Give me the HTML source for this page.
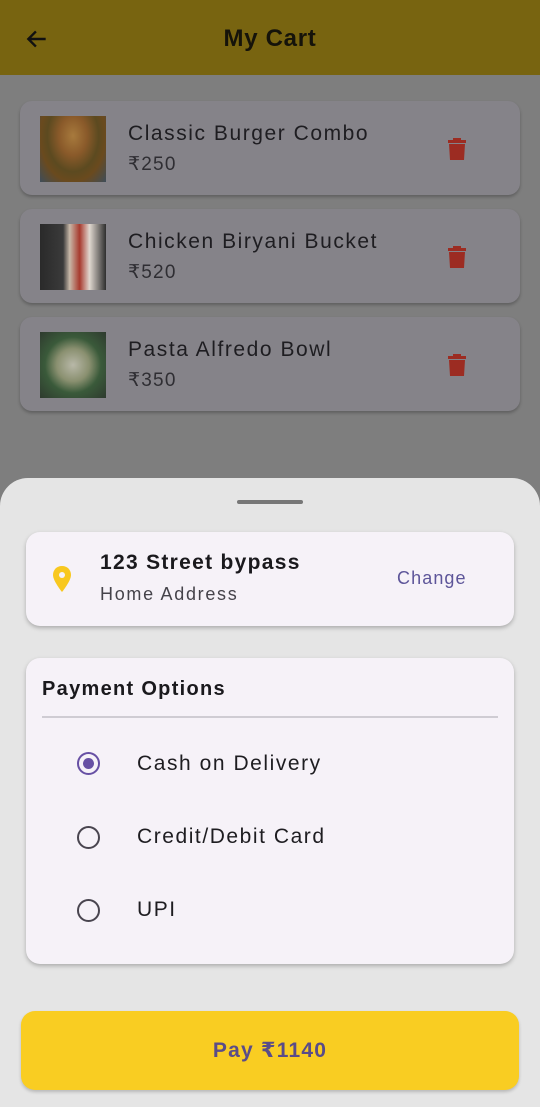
<!DOCTYPE html>
<html><head><meta charset="utf-8"><style>
*{margin:0;padding:0;box-sizing:border-box}
body{width:540px;height:1107px;overflow:hidden;background:#7e7e7e;font-family:"Liberation Sans","DejaVu Sans",sans-serif;position:relative;color:#1c1b1f}
.abs{position:absolute}
.bar{left:0;top:0;width:540px;height:75px;background:#786410}
.card{left:20px;width:500px;height:94px;background:#858389;border-radius:12px;box-shadow:0 2px 3px rgba(0,0,0,.25)}
.img{left:20px;top:15px;width:66px;height:66px}
.t{left:108px;top:21px;font-size:21px;color:#1e1d21;letter-spacing:1.55px}
.p{left:108px;top:52px;font-size:19px;color:#2f2e33;letter-spacing:1.2px}
.tr{left:427px;top:36px}
.sheet{left:0;top:478px;width:540px;height:629px;background:#e5e5e5;border-radius:28px 28px 0 0}
.wc{background:#f6f2f8;border-radius:14px;box-shadow:0 2px 4px rgba(0,0,0,.25)}
.rad{width:23px;height:23px;border:2.5px solid #49454f;border-radius:50%}
.opt{font-size:21px;color:#1e1d21;letter-spacing:1.55px}
</style></head><body>
<div class="abs bar"></div>
<svg class="abs" style="left:24px;top:26px" width="26" height="26" viewBox="0 0 24 24"><path d="M20 12H5M11 5l-7 7 7 7" stroke="#111" stroke-width="2.2" fill="none"/></svg>
<div class="abs" style="left:0;width:540px;top:25px;text-align:center;font-size:24px;font-weight:600;color:#15130a;letter-spacing:.7px">My Cart</div>

<div class="abs card" style="top:101px">
 <div class="abs img" style="background:radial-gradient(ellipse at 50% 30%,#a77a3d 0,#8a5a2a 30%,#5c4a20 55%,#6a4a1e 70%,#3e4d5a 100%)"></div>
 <div class="abs t">Classic Burger Combo</div><div class="abs p">₹250</div>
 <svg class="abs tr" width="20" height="24" viewBox="0 0 20 24"><path d="M6 1h8v2h5v3H1V3h5z M2 7h16l-1 16H3z" fill="#9c2c22"/></svg>
</div>
<div class="abs card" style="top:209px">
 <div class="abs img" style="background:linear-gradient(90deg,#2a2a2a 0,#3a3a3a 35%,#c8b8a8 45%,#a73a2e 60%,#e0d8d0 75%,#2e2e2e 100%)"></div>
 <div class="abs t">Chicken Biryani Bucket</div><div class="abs p">₹520</div>
 <svg class="abs tr" width="20" height="24" viewBox="0 0 20 24"><path d="M6 1h8v2h5v3H1V3h5z M2 7h16l-1 16H3z" fill="#9c2c22"/></svg>
</div>
<div class="abs card" style="top:317px">
 <div class="abs img" style="background:radial-gradient(circle at 50% 50%,#b8b8a8 0,#8a9070 35%,#3a5a3a 60%,#2e3a2e 100%)"></div>
 <div class="abs t">Pasta Alfredo Bowl</div><div class="abs p">₹350</div>
 <svg class="abs tr" width="20" height="24" viewBox="0 0 20 24"><path d="M6 1h8v2h5v3H1V3h5z M2 7h16l-1 16H3z" fill="#9c2c22"/></svg>
</div>

<div class="abs sheet"></div>
<div class="abs" style="left:237px;top:500px;width:66px;height:4px;background:#777;border-radius:2px"></div>

<div class="abs wc" style="left:26px;top:532px;width:488px;height:94px"></div>
<svg class="abs" style="left:51px;top:565px" width="22" height="28" viewBox="0 0 22 28"><path d="M11 1C5.5 1 2 5 2 10c0 6 9 17 9 17s9-11 9-17c0-5-3.5-9-9-9z" fill="#f8c81f"/><circle cx="11" cy="10" r="3" fill="#f6f2f8"/></svg>
<div class="abs" style="left:100px;top:551px;font-size:21px;font-weight:600;color:#1a191d;letter-spacing:1.3px">123 Street bypass</div>
<div class="abs" style="left:100px;top:584px;font-size:18px;color:#45434a;letter-spacing:1.7px">Home Address</div>
<div class="abs" style="left:397px;top:568px;font-size:18px;color:#5d5599;letter-spacing:1.1px">Change</div>

<div class="abs wc" style="left:26px;top:658px;width:488px;height:306px"></div>
<div class="abs" style="left:42px;top:678px;font-size:20px;font-weight:600;color:#1a191d;letter-spacing:1.3px">Payment Options</div>
<div class="abs" style="left:42px;top:716px;width:456px;height:2px;background:#cfccd3"></div>
<div class="abs rad" style="left:77px;top:752px;border-color:#6750a4"><div style="margin:3.5px;width:11px;height:11px;border-radius:50%;background:#6750a4"></div></div>
<div class="abs opt" style="left:137px;top:752px">Cash on Delivery</div>
<div class="abs rad" style="left:77px;top:826px"></div>
<div class="abs opt" style="left:137px;top:825px">Credit/Debit Card</div>
<div class="abs rad" style="left:77px;top:899px"></div>
<div class="abs opt" style="left:137px;top:898px">UPI</div>

<div class="abs" style="left:21px;top:1011px;width:498px;height:79px;background:#f9cd22;border-radius:14px;box-shadow:0 2px 3px rgba(0,0,0,.2);text-align:center;line-height:79px;font-size:21px;font-weight:600;color:#5a4c88;letter-spacing:1.2px">Pay ₹1140</div>
</body></html>
